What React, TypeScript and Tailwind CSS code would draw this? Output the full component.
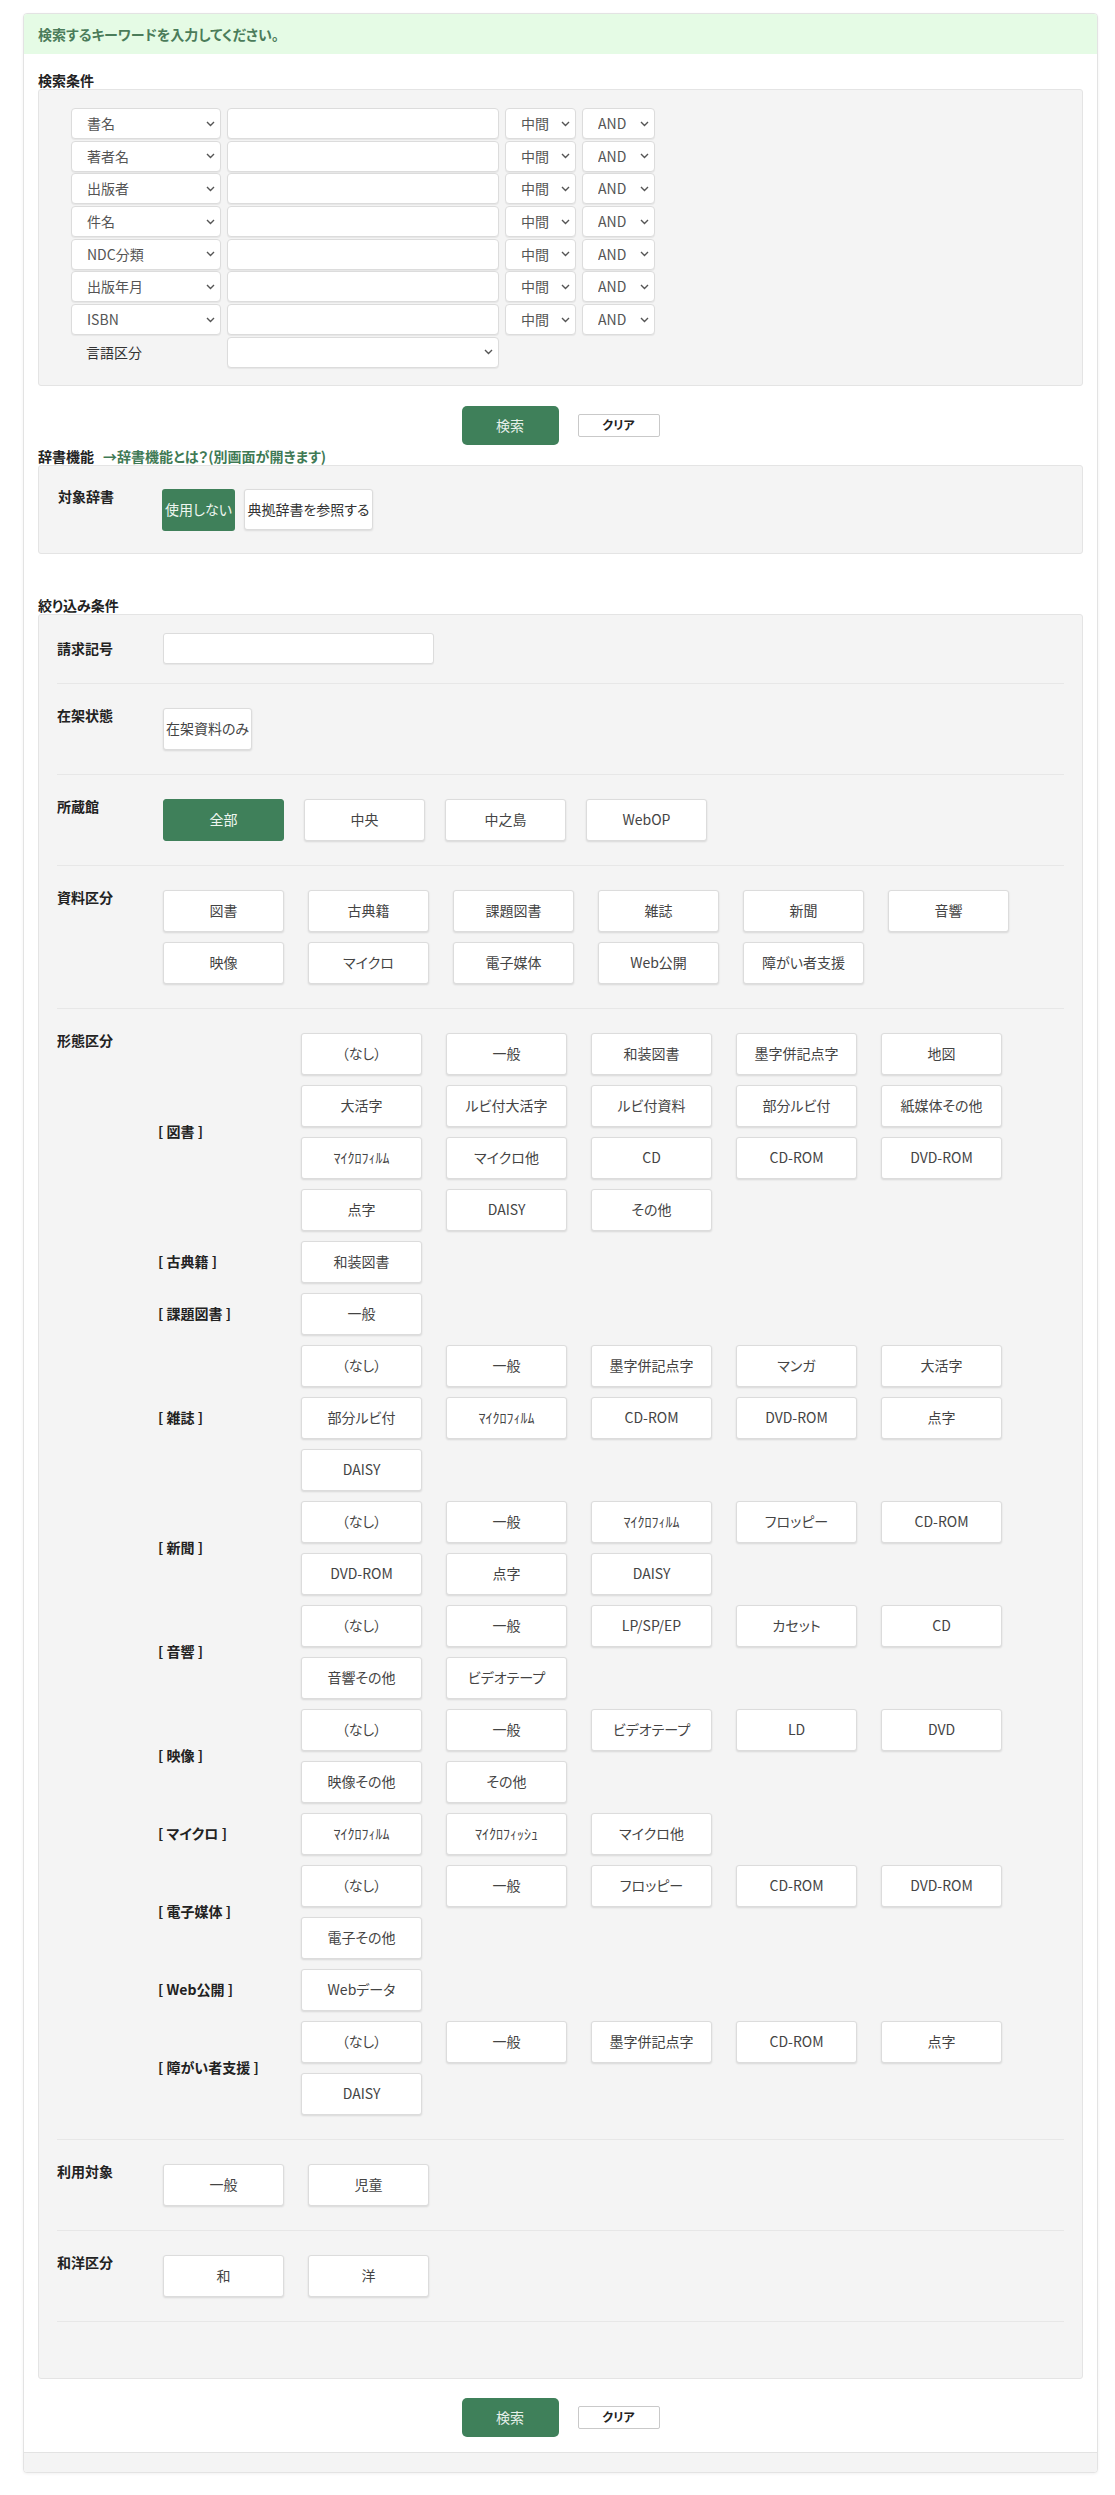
import React from 'react';

const FIELDS = ['書名', '著者名', '出版者', '件名', 'NDC分類', '出版年月', 'ISBN'];

const MATERIALS = ['図書', '古典籍', '課題図書', '雑誌', '新聞', '音響', '映像', 'マイクロ', '電子媒体', 'Web公開', '障がい者支援'];

const FORMS: { label: string; items: string[] }[] = [
  {
    label: '図書',
    items: ['（なし）', '一般', '和装図書', '墨字併記点字', '地図', '大活字', 'ルビ付大活字', 'ルビ付資料', '部分ルビ付', '紙媒体その他', 'ﾏｲｸﾛﾌｨﾙﾑ', 'マイクロ他', 'CD', 'CD-ROM', 'DVD-ROM', '点字', 'DAISY', 'その他'],
  },
  { label: '古典籍', items: ['和装図書'] },
  { label: '課題図書', items: ['一般'] },
  {
    label: '雑誌',
    items: ['（なし）', '一般', '墨字併記点字', 'マンガ', '大活字', '部分ルビ付', 'ﾏｲｸﾛﾌｨﾙﾑ', 'CD-ROM', 'DVD-ROM', '点字', 'DAISY'],
  },
  { label: '新聞', items: ['（なし）', '一般', 'ﾏｲｸﾛﾌｨﾙﾑ', 'フロッピー', 'CD-ROM', 'DVD-ROM', '点字', 'DAISY'] },
  { label: '音響', items: ['（なし）', '一般', 'LP/SP/EP', 'カセット', 'CD', '音響その他', 'ビデオテープ'] },
  { label: '映像', items: ['（なし）', '一般', 'ビデオテープ', 'LD', 'DVD', '映像その他', 'その他'] },
  { label: 'マイクロ', items: ['ﾏｲｸﾛﾌｨﾙﾑ', 'ﾏｲｸﾛﾌｨｯｼｭ', 'マイクロ他'] },
  { label: '電子媒体', items: ['（なし）', '一般', 'フロッピー', 'CD-ROM', 'DVD-ROM', '電子その他'] },
  { label: 'Web公開', items: ['Webデータ'] },
  { label: '障がい者支援', items: ['（なし）', '一般', '墨字併記点字', 'CD-ROM', '点字', 'DAISY'] },
];

function Chevron() {
  return (
    <svg
      className="pointer-events-none absolute right-[6px] top-1/2 -translate-y-1/2"
      width="9"
      height="6"
      viewBox="0 0 9 6"
      fill="none"
    >
      <path d="M1 1l3.5 3.5L8 1" stroke="#555" strokeWidth="1.4" />
    </svg>
  );
}

function Select({ value, width }: { value: string; width: string }) {
  return (
    <div className={`relative h-[31px] shrink-0 ${width}`}>
      <select
        defaultValue={value}
        className="h-full w-full appearance-none rounded-[4px] border border-[#dcdcdc] bg-white pl-[15px] text-[14px] text-[#555] shadow-[0_1px_1px_rgba(0,0,0,0.06)] outline-none"
      >
        <option value={value}>{value}</option>
      </select>
      <Chevron />
    </div>
  );
}

function OptButton({ label, active = false }: { label: string; active?: boolean }) {
  return (
    <button
      type="button"
      className={
        active
          ? 'flex h-[42px] w-[121px] items-center justify-center rounded-[3px] border border-[#3f805a] bg-[#3f805a] text-[14px] text-[#eef6f0]'
          : 'flex h-[42px] w-[121px] items-center justify-center rounded-[3px] border border-[#dcdcdc] bg-white text-[14px] text-[#444] shadow-[0_1px_2px_rgba(0,0,0,0.12)]'
      }
    >
      {label}
    </button>
  );
}

function Row({ label, children, labelWidth = 'w-[106px]' }: { label: string; children: React.ReactNode; labelWidth?: string }) {
  return (
    <div className="flex border-b border-[#e7e7e7] py-[24px]">
      <div className={`${labelWidth} shrink-0 font-bold leading-[14px] text-[#222]`}>{label}</div>
      <div>{children}</div>
    </div>
  );
}

function SearchButtons() {
  return (
    <div className="flex items-center justify-center gap-[19px]">
      <button
        type="button"
        className="h-[39px] w-[97px] rounded-[5px] bg-[#3f805a] text-[14px] text-[#e6f0ea]"
      >
        検索
      </button>
      <button
        type="button"
        className="h-[23px] w-[82px] rounded-[2px] border border-[#c9c9c9] bg-white text-[12px] font-bold text-[#222]"
      >
        クリア
      </button>
    </div>
  );
}

export default function App() {
  return (
    <div className="min-h-[2495px] bg-white pl-[23px] pt-[13px] font-['Noto_Sans_CJK_JP',sans-serif] text-[14px] text-[#333] [font-feature-settings:'palt']">
      <div className="w-[1075px] overflow-hidden rounded-[4px] border border-[#e3e3e3] bg-white shadow-[0_1px_3px_rgba(0,0,0,0.06)]">
        {/* Message banner */}
        <div className="flex h-[40px] items-center bg-[#e5fbe5] px-[14px] font-bold text-[#4b7c5a]">
          検索するキーワードを入力してください。
        </div>

        <div className="px-[14px]">
          {/* Search conditions */}
          <div className="mt-[17px] font-bold leading-[18px] text-[#222]">検索条件</div>
          <div className="rounded-[3px] border border-[#e4e4e4] bg-[#f4f4f4] pb-[17px] pl-[32px] pt-[18px]">
            <div className="flex flex-col gap-[1.7px]">
              {FIELDS.map((f) => (
                <div key={f} className="flex gap-[6px]">
                  <Select value={f} width="w-[150px]" />
                  <input className="h-[31px] w-[272px] rounded-[4px] border border-[#dcdcdc] bg-white shadow-[0_1px_1px_rgba(0,0,0,0.06)] outline-none" />
                  <Select value="中間" width="w-[71px]" />
                  <Select value="AND" width="w-[73px]" />
                </div>
              ))}
              <div className="flex items-center gap-[6px]">
                <div className="w-[150px] pl-[15px] text-[#333]">言語区分</div>
                <Select value="" width="w-[272px]" />
              </div>
            </div>
          </div>

          <div className="mt-[20px]">
            <SearchButtons />
          </div>

          {/* Dictionary */}
          <div className="mt-[2px] flex leading-[18px]">
            <span className="font-bold text-[#222]">辞書機能</span>
            <span className="ml-[9px] font-bold text-[#3f7a55]">→辞書機能とは？(別画面が開きます)</span>
          </div>
          <div className="flex rounded-[3px] border border-[#e4e4e4] bg-[#f4f4f4] pb-[22px] pl-[19px] pt-[23px]">
            <div className="w-[104px] shrink-0 font-bold leading-[14px] text-[#222]">対象辞書</div>
            <div className="flex gap-[9px]">
              <button
                type="button"
                className="h-[42px] w-[73px] rounded-[3px] bg-[#3f805a] text-[14px] text-[#eef6f0]"
              >
                使用しない
              </button>
              <button
                type="button"
                className="h-[41px] w-[129px] rounded-[3px] border border-[#dcdcdc] bg-white text-[14px] text-[#333] shadow-[0_1px_2px_rgba(0,0,0,0.1)]"
              >
                典拠辞書を参照する
              </button>
            </div>
          </div>

          {/* Filters */}
          <div className="mt-[42px] font-bold leading-[18px] text-[#222]">絞り込み条件</div>
          <div className="rounded-[3px] border border-[#e4e4e4] bg-[#f4f4f4] px-[18px]">
            <div className="flex items-center border-b border-[#e7e7e7] pb-[19px] pt-[18px]">
              <div className="w-[106px] shrink-0 font-bold text-[#222]">請求記号</div>
              <input className="h-[31px] w-[271px] rounded-[3px] border border-[#dcdcdc] bg-white shadow-[0_1px_1px_rgba(0,0,0,0.06)] outline-none" />
            </div>

            <Row label="在架状態">
              <button
                type="button"
                className="h-[42px] w-[89px] rounded-[3px] border border-[#dcdcdc] bg-white text-[14px] text-[#444] shadow-[0_1px_2px_rgba(0,0,0,0.12)]"
              >
                在架資料のみ
              </button>
            </Row>

            <Row label="所蔵館">
              <div className="flex gap-[20px]">
                <OptButton label="全部" active />
                <OptButton label="中央" />
                <OptButton label="中之島" />
                <OptButton label="WebOP" />
              </div>
            </Row>

            <Row label="資料区分">
              <div className="grid grid-cols-[repeat(6,121px)] gap-x-[24px] gap-y-[10px]">
                {MATERIALS.map((m) => (
                  <OptButton key={m} label={m} />
                ))}
              </div>
            </Row>

            <Row label="形態区分" labelWidth="w-[101px]">
              <div className="flex flex-col gap-[10px]">
                {FORMS.map((g) => (
                  <div key={g.label} className="flex items-center">
                    <div className="w-[143px] shrink-0 font-bold text-[#222]">[ {g.label} ]</div>
                    <div className="grid grid-cols-[repeat(5,121px)] gap-x-[24px] gap-y-[10px]">
                      {g.items.map((it, i) => (
                        <OptButton key={i} label={it} />
                      ))}
                    </div>
                  </div>
                ))}
              </div>
            </Row>

            <Row label="利用対象">
              <div className="flex gap-[24px]">
                <OptButton label="一般" />
                <OptButton label="児童" />
              </div>
            </Row>

            <Row label="和洋区分">
              <div className="flex gap-[24px]">
                <OptButton label="和" />
                <OptButton label="洋" />
              </div>
            </Row>

            <div className="h-[56px]" />
          </div>

          <div className="mt-[19px]">
            <SearchButtons />
          </div>
        </div>

        <div className="mt-[15px] h-[20px] border-t border-[#e3e3e3] bg-[#f4f4f4]" />
      </div>
    </div>
  );
}
